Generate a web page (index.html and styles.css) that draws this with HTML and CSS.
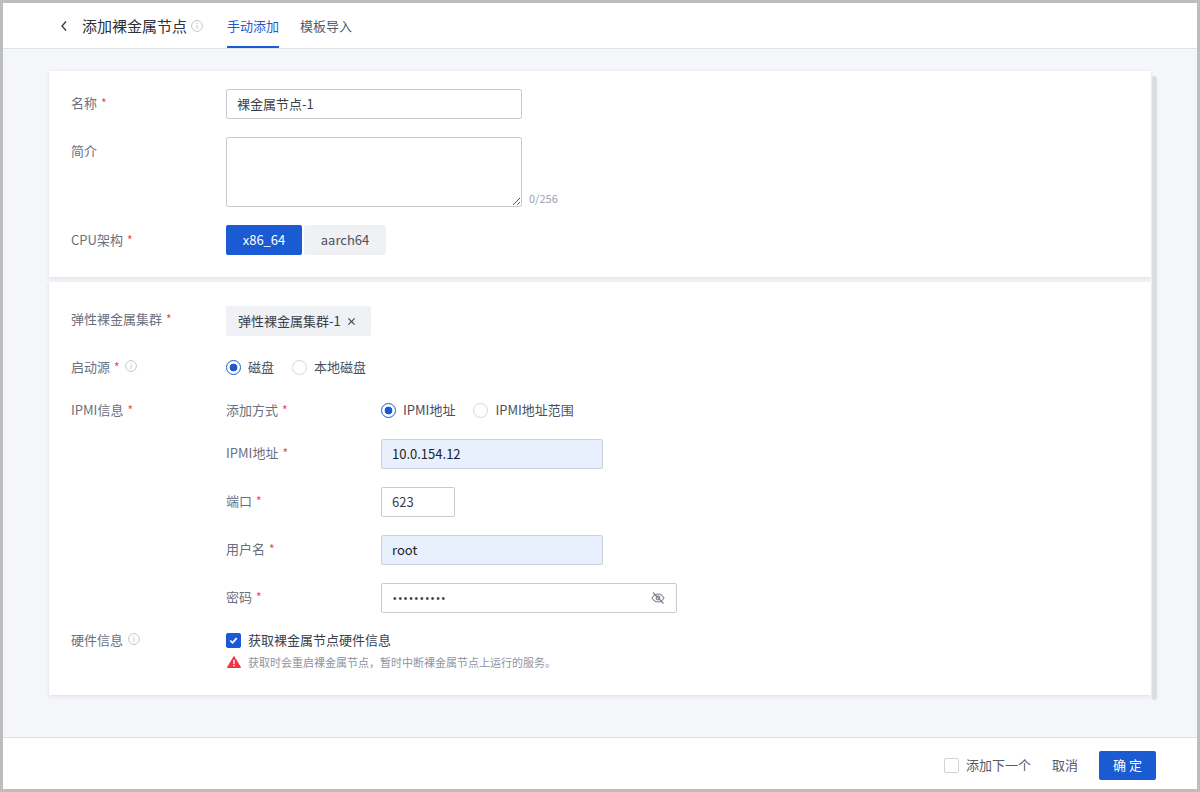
FILE: index.html
```html
<!DOCTYPE html>
<html lang="zh-CN">
<head>
    <meta charset="UTF-8">
    <title>添加裸金属节点</title>
    <link rel="stylesheet" href="styles.css">
</head>
<body>
    <svg class="icon-defs" xmlns="http://www.w3.org/2000/svg">
        <symbol id="icon-info" viewBox="0 0 12 12">
            <circle cx="6" cy="6" r="5.4" fill="none" stroke="currentColor" stroke-width="1"/>
            <rect x="5.5" y="5" width="1" height="3.8" fill="currentColor"/>
            <rect x="5.5" y="3" width="1" height="1.1" fill="currentColor"/>
        </symbol>
    </svg>

    <!-- Header -->
    <header class="top-bar">
        <svg class="back" viewBox="0 0 8 12" xmlns="http://www.w3.org/2000/svg"><path d="M6 1.5 L2 6 L6 10.5" fill="none" stroke="#3a3f4b" stroke-width="1.4"/></svg>
        <h1 class="page-title">添加裸金属节点</h1>
        <svg class="info title-info"><use href="#icon-info"/></svg>
        <nav class="tabs">
            <a class="tab tab-active">手动添加</a>
            <a class="tab">模板导入</a>
        </nav>
    </header>

    <main class="content">
        <div class="cards">
            <!-- Basic info -->
            <section class="card card-basic">
                <div class="row row-name">
                    <label class="label">名称<span class="req">*</span></label>
                    <div class="input input-name">裸金属节点-1</div>
                </div>
                <div class="row row-desc">
                    <label class="label label-top">简介</label>
                    <div class="textarea">
                        <svg class="resize-grip" viewBox="0 0 8 8" xmlns="http://www.w3.org/2000/svg"><path d="M1 8 L8 1 M5 8 L8 5" stroke="#555" stroke-width="1"/></svg>
                    </div>
                    <span class="counter">0/256</span>
                </div>
                <div class="row">
                    <label class="label">CPU架构<span class="req">*</span></label>
                    <div class="segment">
                        <button class="seg seg-on">x86_64</button>
                        <button class="seg seg-off">aarch64</button>
                    </div>
                </div>
            </section>

            <!-- Cluster and IPMI -->
            <section class="card card-detail">
                <div class="row row-cluster">
                    <label class="label">弹性裸金属集群<span class="req">*</span></label>
                    <div class="tag">弹性裸金属集群-1
                        <svg class="tag-close" viewBox="0 0 10 10" xmlns="http://www.w3.org/2000/svg"><path d="M1.5 1.5 L8.5 8.5 M8.5 1.5 L1.5 8.5" stroke="#3a3f4b" stroke-width="1.2"/></svg>
                    </div>
                </div>
                <div class="row row-boot">
                    <label class="label">启动源<span class="req">*</span><svg class="info label-info"><use href="#icon-info"/></svg></label>
                    <div class="radios">
                        <span class="radio radio-on"></span><span class="radio-text">磁盘</span>
                        <span class="radio"></span><span class="radio-text">本地磁盘</span>
                    </div>
                </div>
                <div class="row row-ipmi">
                    <label class="label label-ipmi">IPMI信息<span class="req">*</span></label>
                    <div class="subform">
                        <div class="subrow subrow-method">
                            <label class="sublabel">添加方式<span class="req">*</span></label>
                            <div class="radios">
                                <span class="radio radio-on"></span><span class="radio-text">IPMI地址</span>
                                <span class="radio"></span><span class="radio-text">IPMI地址范围</span>
                            </div>
                        </div>
                        <div class="subrow">
                            <label class="sublabel">IPMI地址<span class="req">*</span></label>
                            <div class="input input-mid input-filled">10.0.154.12</div>
                        </div>
                        <div class="subrow">
                            <label class="sublabel">端口<span class="req">*</span></label>
                            <div class="input input-port">623</div>
                        </div>
                        <div class="subrow">
                            <label class="sublabel">用户名<span class="req">*</span></label>
                            <div class="input input-mid input-filled">root</div>
                        </div>
                        <div class="subrow">
                            <label class="sublabel">密码<span class="req">*</span></label>
                            <div class="input input-pass">
                                <span class="dots">••••••••••</span>
                                <svg class="eye" viewBox="0 0 14 14" xmlns="http://www.w3.org/2000/svg">
                                    <path d="M1 7 C3 3.8 5 3 7 3 C9 3 11 3.8 13 7 C11 10.2 9 11 7 11 C5 11 3 10.2 1 7 Z" fill="none" stroke="#7b808c" stroke-width="1.1"/>
                                    <circle cx="7" cy="7" r="1.9" fill="none" stroke="#7b808c" stroke-width="1.1"/>
                                    <path d="M2 1.5 L12.5 12.5" stroke="#7b808c" stroke-width="1.1"/>
                                </svg>
                            </div>
                        </div>
                    </div>
                </div>
                <div class="row row-hardware">
                    <label class="label label-hardware">硬件信息<svg class="info label-info"><use href="#icon-info"/></svg></label>
                    <div class="hardware">
                        <div class="check-line">
                            <span class="checkbox checkbox-on">
                                <svg viewBox="0 0 14 14" xmlns="http://www.w3.org/2000/svg"><path d="M3.5 7 L6 9.5 L10.5 4.5" fill="none" stroke="#fff" stroke-width="1.9"/></svg>
                            </span>
                            <span class="check-text">获取裸金属节点硬件信息</span>
                        </div>
                        <div class="warning">
                            <svg class="warn-icon" viewBox="0 0 14 12" xmlns="http://www.w3.org/2000/svg">
                                <path d="M7 .5 L13.6 11.5 L.4 11.5 Z" fill="#f5333f" stroke="#f5333f" stroke-linejoin="round"/>
                                <rect x="6.3" y="3.8" width="1.4" height="4.2" fill="#fff"/>
                                <rect x="6.3" y="8.9" width="1.4" height="1.4" fill="#fff"/>
                            </svg>
                            <span>获取时会重启裸金属节点，暂时中断裸金属节点上运行的服务。</span>
                        </div>
                    </div>
                </div>
            </section>
        </div>
        <div class="scroll-thumb"></div>
    </main>

    <!-- Footer -->
    <footer class="bottom-bar">
        <span class="checkbox"></span>
        <span class="next-text">添加下一个</span>
        <a class="cancel">取消</a>
        <button class="confirm">确 定</button>
    </footer>
</body>
</html>
```

FILE: styles.css
```css
* {
    box-sizing: border-box;
}

html, body {
    height: 100%;
    margin: 0;
}

body {
    display: flex;
    flex-direction: column;
    height: 792px;
    overflow: hidden;
    border: 3px solid #bdbdbd;
    background-color: #f5f6fa;
    color: #3a3f4b;
    font-family: "Noto Sans CJK SC", "Noto Sans", sans-serif;
    font-size: 13px;
}

.icon-defs {
    display: none;
}

/* Header */
.top-bar {
    display: flex;
    align-items: center;
    height: 46px;
    padding-left: 57px;
    background-color: #fff;
    border-bottom: 1px solid #dfe1e8;
}

.back {
    width: 8px;
    height: 12px;
}

.page-title {
    margin: 0 0 0 14px;
    font-size: 15px;
    font-weight: 400;
    color: #2c303a;
}

.info {
    color: #c3c6cd;
}

.title-info {
    width: 12px;
    height: 12px;
    margin-left: 4px;
}

.tabs {
    display: flex;
    align-self: stretch;
    gap: 21px;
    margin-left: 24px;
}

.tab {
    display: flex;
    align-items: center;
    height: 45px;
    padding-top: 1px;
    color: #55596a;
    border-bottom: 2px solid transparent;
}

.tab-active {
    color: #1a5ad2;
    border-bottom-color: #1a5ad2;
}

/* Main area */
.content {
    display: flex;
    align-items: flex-start;
    flex: 1;
    padding: 22px 0 0 46px;
}

.cards {
    display: flex;
    flex-direction: column;
    gap: 5px;
    width: 1102px;
}

.card {
    padding-left: 22px;
    background-color: #fff;
    box-shadow: 0 1px 4px rgba(40, 50, 80, 0.12);
}

.card-basic {
    height: 206px;
    padding-top: 18px;
}

.card-detail {
    height: 413px;
    padding-top: 24px;
}

.scroll-thumb {
    width: 5px;
    height: 624px;
    margin: 5px 0 0 1px;
    border-radius: 2px;
    background-color: #dcdde2;
}

/* Form rows */
.row {
    display: flex;
    align-items: center;
    min-height: 30px;
    margin-bottom: 18px;
}

.row-desc {
    align-items: flex-start;
}

.row-cluster {
    margin-bottom: 16px;
}

.row-boot {
    margin-bottom: 13px;
}

.row-ipmi {
    align-items: flex-start;
    margin-bottom: 12px;
}

.row-hardware {
    align-items: flex-start;
}

.label {
    display: flex;
    align-items: center;
    flex: none;
    width: 155px;
    padding-bottom: 2px;
    color: #6b7080;
}

.row-name .label {
    padding-bottom: 4px;
}

.row-cluster .label {
    padding-bottom: 6px;
}

.label-top {
    padding: 4px 0 0;
}

.label-ipmi {
    height: 30px;
}

.label-hardware {
    height: 30px;
}

.req {
    margin-left: 4px;
    font-size: 12px;
    color: #f0455a;
}

.label-info {
    width: 12px;
    height: 12px;
    margin-left: 5px;
}

.input {
    display: flex;
    align-items: center;
    height: 30px;
    padding: 0 10px 2px;
    border: 1px solid #c9cbd0;
    border-radius: 2px;
    background-color: #fff;
}

.input-name {
    width: 296px;
}

.input-mid {
    width: 222px;
}

.input-filled {
    border-color: #c9d0dc;
    background-color: #e8f0fe;
    color: #1c1f26;
}

.input-port {
    width: 74px;
}

.input-pass {
    justify-content: space-between;
    width: 296px;
    padding-bottom: 0;
}

.dots {
    margin-left: 1px;
    font-family: "Liberation Sans", sans-serif;
    font-size: 10px;
    letter-spacing: 1.9px;
}

.eye {
    width: 14px;
    height: 14px;
    margin-right: 1px;
}

.textarea {
    position: relative;
    width: 296px;
    height: 70px;
    border: 1px solid #c9cbd0;
    border-radius: 2px;
}

.resize-grip {
    position: absolute;
    right: 1px;
    bottom: 1px;
    width: 8px;
    height: 8px;
}

.counter {
    align-self: flex-end;
    margin: 0 0 1px 7px;
    font-size: 11px;
    line-height: 16px;
    color: #9a9fab;
}

.segment {
    display: flex;
    gap: 2px;
}

.seg {
    height: 30px;
    padding: 0 0 2px;
    border: 0;
    border-radius: 2px;
    font: inherit;
}

.seg-on {
    width: 76px;
    background-color: #1a5ad2;
    color: #fff;
}

.seg-off {
    width: 82px;
    background-color: #f0f1f5;
    color: #4a4f5d;
}

.tag {
    display: flex;
    align-items: center;
    justify-content: space-between;
    width: 145px;
    height: 30px;
    padding: 0 15px 2px 12px;
    border-radius: 2px;
    background-color: #f0f1f5;
    white-space: nowrap;
}

.tag-close {
    width: 9px;
    height: 9px;
    margin-top: 2px;
}

.radios {
    display: flex;
    align-items: center;
}

.radio {
    flex: none;
    width: 15px;
    height: 15px;
    border: 1px solid #d5d7dc;
    border-radius: 50%;
    background-color: #fff;
}

.radio-on {
    border-color: #1a5ad2;
    background: radial-gradient(circle, #1a5ad2 0 3.6px, #fff 4.2px);
}

.radio-text {
    margin: 0 18px 0 7px;
    padding-bottom: 2px;
    color: #4a4f5d;
}

/* Nested IPMI form */
.subform {
    display: flex;
    flex-direction: column;
    gap: 18px;
}

.subrow {
    display: flex;
    align-items: center;
}

.subrow-method {
    height: 30px;
    margin-bottom: -4px;
}

.sublabel {
    flex: none;
    width: 155px;
    padding-bottom: 4px;
    color: #6b7080;
}

.subrow-method .sublabel {
    padding-bottom: 2px;
}

/* Hardware */
.check-line {
    display: flex;
    align-items: center;
    height: 30px;
}

.checkbox {
    display: block;
    flex: none;
    width: 15px;
    height: 15px;
    border: 1px solid #d0d2d8;
    border-radius: 2px;
    background-color: #fff;
}

.checkbox-on {
    border-color: #1a5ad2;
    background-color: #1a5ad2;
}

.checkbox-on svg {
    display: block;
    width: 13px;
    height: 13px;
}

.check-text {
    margin-left: 7px;
    padding-bottom: 2px;
}

.warning {
    display: flex;
    align-items: center;
    gap: 7px;
    height: 14px;
    margin-left: 1px;
    font-size: 11px;
    color: #8f94a1;
}

.warn-icon {
    width: 14px;
    height: 12px;
}

/* Footer */
.bottom-bar {
    display: flex;
    align-items: flex-start;
    justify-content: flex-end;
    height: 52px;
    padding: 13px 41px 0 0;
    background-color: #fff;
    border-top: 1px solid #dfe1e8;
}

.bottom-bar .checkbox {
    margin-top: 7px;
}

.next-text {
    margin-left: 7px;
    line-height: 28px;
    color: #55596a;
}

.cancel {
    margin-left: 21px;
    line-height: 28px;
    color: #55596a;
}

.confirm {
    width: 57px;
    height: 29px;
    margin-left: 21px;
    padding: 0 0 2px;
    border: 0;
    border-radius: 2px;
    background-color: #1a5ad2;
    color: #fff;
    font: inherit;
}
```
